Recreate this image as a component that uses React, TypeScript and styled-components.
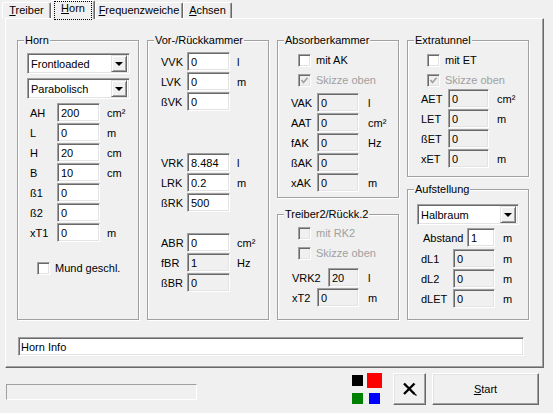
import React from "react";
import styled, { createGlobalStyle } from "styled-components";

const GlobalStyle = createGlobalStyle`
  html, body {
    margin: 0;
    padding: 0;
    background: #f0f0f0;
  }
  body {
    font-family: "Liberation Sans", Arial, sans-serif;
    font-size: 11px;
    color: #000;
  }
`;

const Window = styled.div`
  width: 553px;
  height: 413px;
  display: flex;
  flex-direction: column;
  background: #f0f0f0;
  overflow: hidden;
`;

const TabStrip = styled.div`
  display: flex;
  align-items: flex-end;
  height: 18px;
  padding-left: 2px;
  position: relative;
  z-index: 1;
`;

const Tab = styled.div<{ $w: number; $active?: boolean }>`
  box-sizing: border-box;
  width: ${(p) => p.$w}px;
  height: ${(p) => (p.$active ? 19 : 16)}px;
  margin-bottom: ${(p) => (p.$active ? -1 : 0)}px;
  background: #f0f0f0;
  border-top: 1px solid #fff;
  border-left: 1px solid #fff;
  border-right: 1px solid #696969;
  border-radius: 2px 2px 0 0;
  box-shadow: inset -1px 0 0 #a0a0a0;
  display: flex;
  justify-content: center;
  padding-top: ${(p) => (p.$active ? 1 : 1)}px;
  line-height: 13px;
`;

const FocusText = styled.span`
  outline: 1px dotted #000;
  outline-offset: 0;
  padding: 0 6px 1px;
`;

const Panel = styled.div`
  box-sizing: border-box;
  margin-left: 5px;
  width: 539px;
  height: 350px;
  border-top: 1px solid #fff;
  border-left: 1px solid #fff;
  border-right: 1px solid #696969;
  border-bottom: 1px solid #696969;
  box-shadow: inset -1px -1px 0 #a0a0a0;
  padding: 21px 0 0 11px;
  display: flex;
  flex-direction: column;
`;

const GroupsRow = styled.div`
  display: flex;
  gap: 8px;
  height: 281px;
`;

const Column = styled.div<{ $gap: number }>`
  display: flex;
  flex-direction: column;
  gap: ${(p) => p.$gap}px;
`;

const Group = styled.div<{ $h: number; $pt: number }>`
  position: relative;
  box-sizing: border-box;
  width: 122px;
  height: ${(p) => p.$h}px;
  border: 1px solid #a0a0a0;
  box-shadow: inset 1px 1px 0 #fff, 1px 1px 0 #fff;
  padding-top: ${(p) => p.$pt}px;
  display: flex;
  flex-direction: column;
`;

const GroupTitle = styled.span`
  position: absolute;
  top: -7px;
  left: 6px;
  padding: 0 1px;
  background: #f0f0f0;
  line-height: 13px;
`;

const Row = styled.div<{ $pl: number; $mt?: number }>`
  display: flex;
  align-items: center;
  height: 19px;
  margin-bottom: 1px;
  margin-top: ${(p) => p.$mt ?? 0}px;
  padding-left: ${(p) => p.$pl}px;
`;

const Label = styled.span<{ $w: number }>`
  width: ${(p) => p.$w}px;
  flex: none;
  white-space: nowrap;
`;

const Edit = styled.input<{ $w: number; $off?: boolean }>`
  box-sizing: border-box;
  width: ${(p) => p.$w}px;
  height: 19px;
  margin: 0;
  border: 1px solid;
  border-color: #a0a0a0 #fff #fff #a0a0a0;
  box-shadow: inset 1px 1px 0 #696969, inset -1px -1px 0 #e3e3e3;
  background: ${(p) => (p.$off ? "#f0f0f0" : "#fff")};
  padding: 0 0 0 3px;
  font: inherit;
  color: #000;
  outline: none;
  flex: none;
`;

const Unit = styled.span<{ $gap: number }>`
  margin-left: ${(p) => p.$gap}px;
  white-space: nowrap;
`;

const CheckRow = styled.div<{ $pl: number; $off?: boolean; $mt?: number }>`
  display: flex;
  align-items: center;
  height: 20px;
  margin-top: ${(p) => p.$mt ?? 0}px;
  padding-left: ${(p) => p.$pl}px;
  color: ${(p) => (p.$off ? "#a0a0a0" : "#000")};
`;

const CheckBox = styled.span<{ $off?: boolean }>`
  box-sizing: border-box;
  width: 13px;
  height: 13px;
  margin-right: 5px;
  border: 1px solid;
  border-color: #a0a0a0 #fff #fff #a0a0a0;
  box-shadow: inset 1px 1px 0 #696969, inset -1px -1px 0 #e3e3e3;
  background: ${(p) => (p.$off ? "#f0f0f0" : "#fff")};
  display: flex;
  align-items: center;
  justify-content: center;
  flex: none;
`;

const Combo = styled.div<{ $w: number; $pl: number; $mb: number }>`
  box-sizing: border-box;
  width: ${(p) => p.$w}px;
  height: 21px;
  margin-left: ${(p) => p.$pl}px;
  margin-bottom: ${(p) => p.$mb}px;
  border: 1px solid;
  border-color: #a0a0a0 #fff #fff #a0a0a0;
  box-shadow: inset 1px 1px 0 #696969, inset -1px -1px 0 #e3e3e3;
  background: #fff;
  display: flex;
  align-items: center;
  padding: 0 2px 0 3px;
  flex: none;
`;

const ComboText = styled.span`
  flex: 1;
`;

const DropButton = styled.span`
  box-sizing: border-box;
  width: 16px;
  height: 17px;
  background: #f0f0f0;
  border: 1px solid;
  border-color: #e3e3e3 #696969 #696969 #e3e3e3;
  box-shadow: inset 1px 1px 0 #fff, inset -1px -1px 0 #a0a0a0;
  display: flex;
  align-items: center;
  justify-content: center;
`;

const Arrow = styled.span`
  width: 0;
  height: 0;
  border-left: 4px solid transparent;
  border-right: 4px solid transparent;
  border-top: 4px solid #000;
  margin-top: 1px;
`;

const InfoField = styled.input`
  box-sizing: border-box;
  width: 506px;
  height: 19px;
  margin: 16px 0 0 1px;
  border: 1px solid;
  border-color: #a0a0a0 #fff #fff #a0a0a0;
  box-shadow: inset 1px 1px 0 #696969, inset -1px -1px 0 #e3e3e3;
  background: #fff;
  padding: 0 0 0 2px;
  font: inherit;
  color: #000;
  outline: none;
`;

const BottomBar = styled.div`
  display: flex;
  align-items: flex-start;
  height: 45px;
  box-sizing: border-box;
  padding: 5px 14px 0 0;
`;

const Progress = styled.div`
  box-sizing: border-box;
  width: 191px;
  height: 16px;
  margin: 11px 0 0 6px;
  border: 1px solid;
  border-color: #a0a0a0 #fff #fff #a0a0a0;
`;

const Swatches = styled.div`
  display: grid;
  grid-template-columns: 15px 15px;
  grid-template-rows: 15px 15px;
  column-gap: 2px;
  row-gap: 3px;
  place-items: center;
  margin-left: auto;
  margin-right: 11px;
`;

const Swatch = styled.span<{ $c: string; $big?: boolean }>`
  width: ${(p) => (p.$big ? 15 : 11)}px;
  height: ${(p) => (p.$big ? 15 : 11)}px;
  background: ${(p) => p.$c};
`;

const Button = styled.button<{ $w: number }>`
  box-sizing: border-box;
  width: ${(p) => p.$w}px;
  height: 32px;
  margin: 0;
  padding: 0;
  background: #f0f0f0;
  border: 1px solid;
  border-color: #fff #696969 #696969 #fff;
  box-shadow: inset -1px -1px 0 #a0a0a0, inset 1px 1px 0 #e3e3e3;
  font: inherit;
  color: #000;
  display: flex;
  align-items: center;
  justify-content: center;
`;

const ButtonGap = styled.span`
  width: 6px;
  flex: none;
`;

type FieldDef = {
  label: string;
  value: string;
  unit?: string;
  off?: boolean;
  mt?: number;
  pl?: number;
  labelW?: number;
  inputW?: number;
};

type Layout = { pl: number; labelW: number; inputW: number; gap: number };

const Fields = ({ items, layout }: { items: FieldDef[]; layout: Layout }) => (
  <>
    {items.map((f) => (
      <Row key={f.label} $pl={f.pl ?? layout.pl} $mt={f.mt}>
        <Label $w={f.labelW ?? layout.labelW}>{f.label}</Label>
        <Edit
          $w={f.inputW ?? layout.inputW}
          $off={f.off}
          readOnly
          value={f.value}
        />
        {f.unit && <Unit $gap={layout.gap}>{f.unit}</Unit>}
      </Row>
    ))}
  </>
);

const Check = ({
  text,
  pl,
  off,
  checked,
  mt,
}: {
  text: string;
  pl: number;
  off?: boolean;
  checked?: boolean;
  mt?: number;
}) => (
  <CheckRow $pl={pl} $off={off} $mt={mt}>
    <CheckBox $off={off}>
      {checked && (
        <svg width="9" height="9" viewBox="0 0 9 9">
          <path
            d="M1.5 4 L3.5 6.5 L7.5 1.8"
            fill="none"
            stroke={off ? "#a0a0a0" : "#000"}
            strokeWidth="1.7"
          />
        </svg>
      )}
    </CheckBox>
    {text}
  </CheckRow>
);

const ComboBox = ({ text, w, pl, mb }: { text: string; w: number; pl: number; mb: number }) => (
  <Combo $w={w} $pl={pl} $mb={mb}>
    <ComboText>{text}</ComboText>
    <DropButton>
      <Arrow />
    </DropButton>
  </Combo>
);

const hornFields: FieldDef[] = [
  { label: "AH", value: "200", unit: "cm²" },
  { label: "L", value: "0", unit: "m" },
  { label: "H", value: "20", unit: "cm" },
  { label: "B", value: "10", unit: "cm" },
  { label: "ß1", value: "0" },
  { label: "ß2", value: "0" },
  { label: "xT1", value: "0", unit: "m" },
];

const vorFields: FieldDef[] = [
  { label: "VVK", value: "0", unit: "l" },
  { label: "LVK", value: "0", unit: "m" },
  { label: "ßVK", value: "0" },
  { label: "VRK", value: "8.484", unit: "l", mt: 41 },
  { label: "LRK", value: "0.2", unit: "m" },
  { label: "ßRK", value: "500" },
  { label: "ABR", value: "0", unit: "cm²", mt: 20 },
  { label: "fBR", value: "1", unit: "Hz", off: true },
  { label: "ßBR", value: "0", off: true },
];

const absorberFields: FieldDef[] = [
  { label: "VAK", value: "0", unit: "l", off: true, mt: 3 },
  { label: "AAT", value: "0", unit: "cm²", off: true },
  { label: "fAK", value: "0", unit: "Hz", off: true },
  { label: "ßAK", value: "0", off: true },
  { label: "xAK", value: "0", unit: "m", off: true },
];

const treiber2Fields: FieldDef[] = [
  { label: "VRK2", value: "20", unit: "l", off: true, mt: 5, labelW: 36, inputW: 31 },
  { label: "xT2", value: "0", unit: "m", off: true },
];

const extraFields: FieldDef[] = [
  { label: "AET", value: "0", unit: "cm²", off: true, mt: -1 },
  { label: "LET", value: "0", unit: "m", off: true },
  { label: "ßET", value: "0", off: true },
  { label: "xET", value: "0", unit: "m", off: true },
];

const aufstellungFields: FieldDef[] = [
  { label: "Abstand", value: "1", unit: "m", mt: 3, pl: 15, labelW: 44, inputW: 28 },
  { label: "dL1", value: "0", unit: "m", off: true, mt: 1 },
  { label: "dL2", value: "0", unit: "m", off: true },
  { label: "dLET", value: "0", unit: "m", off: true },
];

const App = () => (
  <Window>
    <GlobalStyle />
    <TabStrip>
      <Tab $w={49}>
        <span>
          <u>T</u>reiber
        </span>
      </Tab>
      <Tab $w={44} $active>
        <FocusText>
          <u>H</u>orn
        </FocusText>
      </Tab>
      <Tab $w={88}>
        <span>
          <u>F</u>requenzweiche
        </span>
      </Tab>
      <Tab $w={49}>
        <span>
          <u>A</u>chsen
        </span>
      </Tab>
    </TabStrip>

    <Panel>
      <GroupsRow>
        <Group $h={280} $pt={12}>
          <GroupTitle>Horn</GroupTitle>
          <ComboBox text="Frontloaded" w={103} pl={9} mb={4} />
          <ComboBox text="Parabolisch" w={103} pl={9} mb={4} />
          <Fields items={hornFields} layout={{ pl: 12, labelW: 27, inputW: 43, gap: 7 }} />
          <Check text="Mund geschl." pl={19} mt={15} />
        </Group>

        <Group $h={280} $pt={11}>
          <GroupTitle>Vor-/Rückkammer</GroupTitle>
          <Fields items={vorFields} layout={{ pl: 13, labelW: 26, inputW: 43, gap: 7 }} />
        </Group>

        <Column $gap={16}>
          <Group $h={158} $pt={9}>
            <GroupTitle>Absorberkammer</GroupTitle>
            <Check text="mit AK" pl={20} />
            <Check text="Skizze oben" pl={20} off checked />
            <Fields items={absorberFields} layout={{ pl: 13, labelW: 26, inputW: 42, gap: 9 }} />
          </Group>
          <Group $h={106} $pt={8}>
            <GroupTitle>Treiber2/Rückk.2</GroupTitle>
            <Check text="mit RK2" pl={20} off />
            <Check text="Skizze oben" pl={20} off />
            <Fields items={treiber2Fields} layout={{ pl: 14, labelW: 25, inputW: 42, gap: 9 }} />
          </Group>
        </Column>

        <Column $gap={12}>
          <Group $h={137} $pt={9}>
            <GroupTitle>Extratunnel</GroupTitle>
            <Check text="mit ET" pl={19} />
            <Check text="Skizze oben" pl={19} off checked />
            <Fields items={extraFields} layout={{ pl: 13, labelW: 27, inputW: 41, gap: 8 }} />
          </Group>
          <Group $h={131} $pt={14}>
            <GroupTitle>Aufstellung</GroupTitle>
            <ComboBox text="Halbraum" w={102} pl={9} mb={0} />
            <Fields items={aufstellungFields} layout={{ pl: 13, labelW: 32, inputW: 42, gap: 8 }} />
          </Group>
        </Column>
      </GroupsRow>

      <InfoField readOnly value="Horn Info" />
    </Panel>

    <BottomBar>
      <Progress />
      <Swatches>
        <Swatch $c="#000" />
        <Swatch $c="#ff0000" $big />
        <Swatch $c="#008000" />
        <Swatch $c="#0000ff" />
      </Swatches>
      <Button $w={33} aria-label="Abbrechen">
        <svg width="16" height="14" viewBox="0 0 16 14">
          <path d="M2 1.5 L12.5 12 M12.5 1.5 L2 12" stroke="#000" strokeWidth="2.4" fill="none" />
          <path d="M12 11.5 L14.5 13.5" stroke="#000" strokeWidth="1.2" fill="none" />
        </svg>
      </Button>
      <ButtonGap />
      <Button $w={107}>
        <span>
          <u>S</u>tart
        </span>
      </Button>
    </BottomBar>
  </Window>
);

export default App;
